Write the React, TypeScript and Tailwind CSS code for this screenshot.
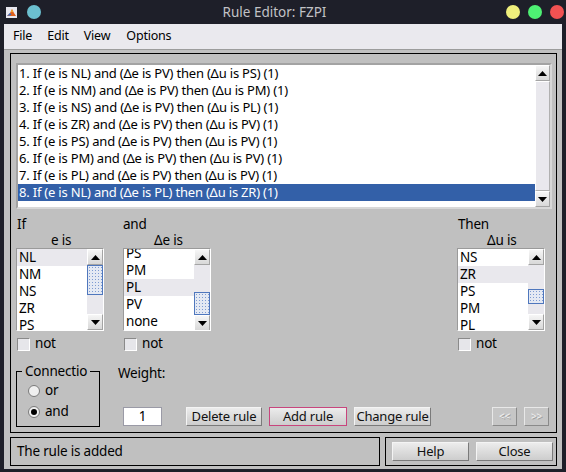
import { useId } from 'react';

// Rule Editor window (MATLAB fuzzy toolbox), drawn at 566x472

const rules = [
  '1. If (e is NL) and (Δe is PV) then (Δu is PS) (1)',
  '2. If (e is NM) and (Δe is PV) then (Δu is PM) (1)',
  '3. If (e is NS) and (Δe is PV) then (Δu is PL) (1)',
  '4. If (e is ZR) and (Δe is PV) then (Δu is PV) (1)',
  '5. If (e is PS) and (Δe is PV) then (Δu is PV) (1)',
  '6. If (e is PM) and (Δe is PV) then (Δu is PV) (1)',
  '7. If (e is PL) and (Δe is PV) then (Δu is PV) (1)',
  '8. If (e is NL) and (Δe is PL) then (Δu is ZR) (1)',
];

function ArrowBtn({ up }: { up?: boolean }) {
  return (
    <div className="h-[16px] shrink-0 flex items-center justify-center bg-linear-to-b from-[#f6f6f6] to-[#d8d8d8] border border-[#a4a4a4] border-t-white border-l-white">
      <svg width="9" height="5" viewBox="0 0 9 5">
        {up ? <path d="M0 5 L4.5 0 L9 5Z" fill="#000" /> : <path d="M0 0 L4.5 5 L9 0Z" fill="#000" />}
      </svg>
    </div>
  );
}

function Thumb({ top, height }: { top: number; height: number }) {
  const id = useId();
  return (
    <div className="relative border border-[#4f77bd] bg-[#e4e9f3]" style={{ marginTop: top, height }}>
      <svg className="absolute inset-0 w-full h-full">
        <defs>
          <pattern id={id} width="3" height="3" patternUnits="userSpaceOnUse">
            <rect x="1" y="1" width="1" height="1" fill="#7d9bd2" />
          </pattern>
        </defs>
        <rect width="100%" height="100%" fill={`url(#${id})`} />
      </svg>
    </div>
  );
}

function SmallList({
  items,
  sel,
  shift,
  thumbTop,
  thumbH,
}: {
  items: string[];
  sel: number;
  shift: number;
  thumbTop: number;
  thumbH: number;
}) {
  return (
    <div className="w-[88px] h-[83px] flex bg-white border border-[#9a9a9a] border-b-white border-r-white overflow-hidden">
      <div className="flex-1 overflow-hidden">
        <div className="flex flex-col" style={{ marginTop: shift }}>
          {items.map((it, i) => (
            <div
              key={it}
              className={`h-[17px] shrink-0 pl-[2px] leading-[17px] text-[13.5px] text-black ${i === sel ? 'bg-[#e9e8ed]' : ''}`}
            >
              {it}
            </div>
          ))}
        </div>
      </div>
      <div className="w-[16px] flex flex-col bg-[#e9e8ed]">
        <ArrowBtn up />
        <div className="flex-1 flex flex-col">
          <Thumb top={thumbTop} height={thumbH} />
        </div>
        <ArrowBtn />
      </div>
    </div>
  );
}

function NotBox() {
  return (
    <div className="mt-[6px] h-[14px] flex items-center gap-[5px] pl-[1px]">
      <div className="w-[13px] h-[13px] bg-[#e6e6ea] border border-[#8a8a8a] border-b-white border-r-white" />
      <span className="text-[13.5px] leading-none text-black">not</span>
    </div>
  );
}

function Btn({ label, w, focus }: { label: string; w: number; focus?: boolean }) {
  return (
    <div
      className={`h-[19px] shrink-0 flex items-center justify-center whitespace-nowrap text-[13px] tracking-[-0.2px] text-[#111] bg-linear-to-b from-[#ececec] to-[#cdcdcd] border ${
        focus ? 'border-[#c8457d]' : 'border-[#7a7a7a] border-t-[#f4f4f4] border-l-[#f4f4f4]'
      }`}
      style={{ width: w }}
    >
      {label}
    </div>
  );
}

function NavBtn({ label }: { label: string }) {
  return (
    <div className="w-[25px] h-[19px] flex items-center justify-center text-[10px] text-[#f2f2f2] bg-[#c6c6c6] border border-[#8a8a8a] border-t-[#e8e8e8] border-l-[#e8e8e8] [text-shadow:1px_1px_0_#9a9a9a]">
      {label}
    </div>
  );
}

function Radio({ on, label }: { on?: boolean; label: string }) {
  return (
    <div className="flex items-center gap-[5px] h-[16px]">
      <div className="w-[12px] h-[12px] rounded-full border border-[#7a7a7a] bg-[#f0f0f0] flex items-center justify-center">
        {on && <div className="w-[6px] h-[6px] rounded-full bg-black" />}
      </div>
      <span className="text-[13.5px] leading-none text-black">{label}</span>
    </div>
  );
}

export default function App() {
  return (
    <div className="w-[566px] h-[472px] bg-[#1e1f29] flex flex-col overflow-hidden font-['Noto_Sans',sans-serif] tracking-[-0.2px]">
      {/* Title bar */}
      <div className="h-[24px] shrink-0 flex items-center">
        <svg className="ml-[6px]" width="11" height="11" viewBox="0 0 11 11">
          <rect width="11" height="11" fill="#e8e8f0" />
          <path d="M1 9 L4 6 L6 2 L8 6 L10 9 Z" fill="#e0601c" />
          <path d="M1 9 L4 6 L5.5 8 Z" fill="#2a6fcf" />
          <path d="M6 2 L7 5 L5 5 Z" fill="#f2b02a" />
        </svg>
        <div className="ml-[10px] w-[14px] h-[14px] rounded-full bg-[#6cc0d0]" />
        <div className="flex-1 text-center text-[13.5px] tracking-normal text-[#c2c2c6] pl-[2px]">Rule Editor: FZPI</div>
        <div className="w-[14px] h-[14px] rounded-full bg-[#f0f07c]" />
        <div className="ml-[8px] w-[14px] h-[14px] rounded-full bg-[#4ef073]" />
        <div className="ml-[8px] mr-[2px] w-[14px] h-[14px] rounded-full bg-[#f25252]" />
      </div>

      {/* Window */}
      <div className="mx-[4px] flex-1 flex flex-col mb-[3px]">
        <div className="h-[26px] shrink-0 bg-[#eae9ee] border-b border-[#9c9c9c] flex items-center text-[12.5px] text-black">
          <span className="ml-[9px]">File</span>
          <span className="ml-[15px]">Edit</span>
          <span className="ml-[15px]">View</span>
          <span className="ml-[16px]">Options</span>
        </div>

        <div className="flex-1 bg-[#c0c0c0] flex flex-col pl-[6px] pr-[5px]">
          {/* Main frame */}
          <div className="mt-[3px] h-[380px] border border-black flex flex-col">
            {/* Rule list */}
            <div className="ml-[5px] mt-[9px] w-[536px] h-[146px] flex bg-white border-2 border-[#a3a3a3] border-b-[#d8d8d8] border-r-[#d8d8d8]">
              <div className="flex-1 flex flex-col">
                {rules.map((r, i) => (
                  <div
                    key={r}
                    className={`h-[17px] leading-[17px] pl-[1px] text-[13px] whitespace-nowrap ${
                      i === 7 ? 'bg-[#3360a8] text-white' : 'text-black'
                    }`}
                  >
                    {r}
                  </div>
                ))}
              </div>
              <div className="w-[15px] flex flex-col bg-[#e9e8ed]">
                <ArrowBtn up />
                <div className="flex-1 border border-[#b0b0b0] border-t-white border-l-white bg-[#e9e8ed]" />
                <ArrowBtn />
              </div>
            </div>

            {/* Antecedent / consequent pickers */}
            <div className="mt-[7px] flex text-[13.5px] text-black">
              <div className="ml-[5px] flex flex-col">
                <div className="h-[16px] leading-[16px] pl-[1px]">If</div>
                <div className="h-[16px] leading-[16px] pl-[35px]">e is</div>
                <SmallList items={['NL', 'NM', 'NS', 'ZR', 'PS', 'PM', 'PL']} sel={0} shift={0} thumbTop={0} thumbH={30} />
                <NotBox />
              </div>
              <div className="ml-[19px] flex flex-col">
                <div className="h-[16px] leading-[16px]">and</div>
                <div className="h-[16px] leading-[16px] pl-[31px]">Δe is</div>
                <SmallList items={['PS', 'PM', 'PL', 'PV', 'none']} sel={2} shift={-4} thumbTop={27} thumbH={23} />
                <NotBox />
              </div>
              <div className="ml-[246px] flex flex-col">
                <div className="h-[16px] leading-[16px] pl-[1px]">Then</div>
                <div className="h-[16px] leading-[16px] pl-[30px]">Δu is</div>
                <SmallList items={['NS', 'ZR', 'PS', 'PM', 'PL']} sel={1} shift={0} thumbTop={24} thumbH={15} />
                <NotBox />
              </div>
            </div>

            {/* Connection, weight, buttons */}
            <div className="mt-[12px] flex">
              <div className="relative ml-[5px] pt-[8px]">
                <div className="w-[84px] h-[56px] border border-black flex flex-col pl-[11px] pt-[11px] gap-[5px]">
                  <Radio label="or" />
                  <Radio on label="and" />
                </div>
                <span className="absolute left-[6px] top-0 px-[3px] bg-[#c0c0c0] text-[13.5px] leading-[16px] text-black">
                  Connectio
                </span>
              </div>
              <div className="ml-[18px] flex flex-col">
                <div className="mt-[2px] h-[16px] leading-[16px] text-[13.5px] text-black">Weight:</div>
                <div className="mt-[26px] flex items-center">
                  <div className="ml-[5px] w-[39px] h-[19px] bg-white border border-[#9a9aa6] flex items-center justify-center text-[13.5px] text-black">
                    1
                  </div>
                  <div className="ml-[24px]">
                    <Btn label="Delete rule" w={76} />
                  </div>
                  <div className="ml-[7px]">
                    <Btn label="Add rule" w={78} focus />
                  </div>
                  <div className="ml-[7px]">
                    <Btn label="Change rule" w={77} />
                  </div>
                  <div className="ml-[61px]">
                    <NavBtn label="<<" />
                  </div>
                  <div className="ml-[7px]">
                    <NavBtn label=">>" />
                  </div>
                </div>
              </div>
            </div>
          </div>

          {/* Status and help/close */}
          <div className="mt-[4px] h-[29px] flex">
            <div className="w-[370px] border border-black flex items-center pl-[6px] text-[13.5px] text-black">
              The rule is added
            </div>
            <div className="ml-[5px] flex-1 border border-black flex items-center pl-[6px] gap-[7px]">
              <Btn label="Help" w={77} />
              <Btn label="Close" w={77} />
            </div>
          </div>
        </div>
      </div>
    </div>
  );
}
